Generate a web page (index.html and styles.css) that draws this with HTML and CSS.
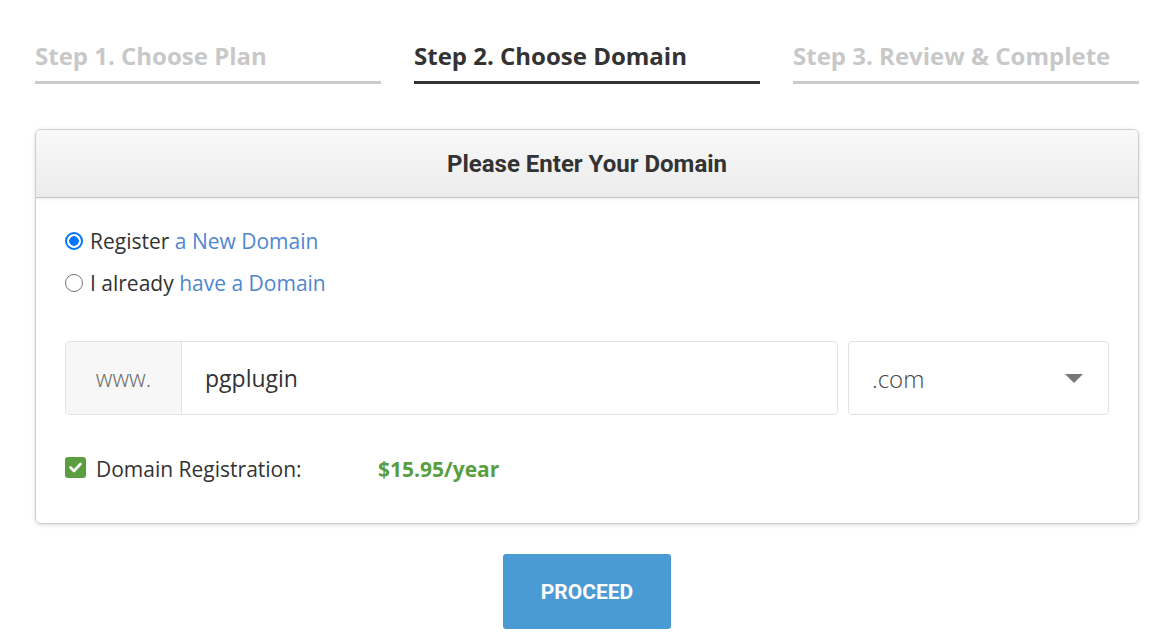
FILE: index.html
```html
<!DOCTYPE html>
<html>
<head>
<meta charset="utf-8">
<link rel="stylesheet" href="styles.css">
</head>
<body>
<div class="wrap">
  <div class="steps">
    <div class="step">Step 1. Choose Plan</div>
    <div class="step active">Step 2. Choose Domain</div>
    <div class="step">Step 3. Review &amp; Complete</div>
  </div>
  <div class="panel">
    <div class="panel-head">Please Enter Your Domain</div>
    <div class="panel-body">
      <label class="radio-row"><span class="radio checked"></span><span>Register <span class="link">a New Domain</span></span></label>
      <label class="radio-row"><span class="radio"></span><span>I already <span class="link">have a Domain</span></span></label>
      <div class="domain-row">
        <div class="input-group">
          <div class="addon">www.</div>
          <div class="field">pgplugin</div>
        </div>
        <div class="select">
          <span>.com</span>
          <svg class="caret" width="18" height="10" viewBox="0 0 18 10"><path d="M0 0H18L9 9Z" fill="#777"/></svg>
        </div>
      </div>
      <div class="reg-row">
        <span class="check"><svg width="21" height="21" viewBox="0 0 21 21"><rect width="21" height="21" rx="3" fill="#5a9e3f"/><path d="M5.5 10.5l3.5 3.5 6.5-7" stroke="#fff" stroke-width="2.6" fill="none" stroke-linecap="round" stroke-linejoin="round"/></svg></span>
        <span class="reg-label">Domain Registration:</span>
        <span class="price">$15.95/year</span>
      </div>
    </div>
  </div>
  <div class="actions">
    <button class="btn">PROCEED</button>
  </div>
</div>
</body>
</html>
```
FILE: styles.css
```css
* { box-sizing: border-box; }
body { margin: 0; background: #fff; font-family: "Open Sans", "Liberation Sans", sans-serif; color: #333; }
.wrap { width: 1104px; margin-left: 35px; padding-top: 0; }
.steps { display: flex; gap: 33px; }
.step {
  flex: 1;
  font-size: 24px;
  font-weight: 700;
  line-height: 30px;
  color: #c8c8c8;
  padding-top: 41px;
  padding-bottom: 10px;
  border-bottom: 3px solid #cbcbcb;
}
.step.active { color: #333; border-bottom-color: #333; }
.panel {
  margin-top: 45px;
  border: 1px solid #cfcfcf;
  border-radius: 6px;
  box-shadow: 0 1px 4px rgba(0,0,0,0.15);
  overflow: hidden;
}
.panel-head {
  height: 68px;
  background: linear-gradient(#f9f9f9, #ebebeb);
  border-bottom: 1px solid #c4c4c4;
  box-shadow: 0 1px 3px rgba(0,0,0,0.08);
  display: flex; align-items: center; justify-content: center;
  font-family: Roboto, "Liberation Sans", sans-serif;
  font-weight: 700;
  font-size: 24px;
  color: #333;
}
.panel-body { padding: 22px 29px 40px 29px; }
.radio-row { display: flex; align-items: center; gap: 7px; font-size: 21px; line-height: 42px; height: 42px; }
.radio {
  width: 18px; height: 18px; border-radius: 50%;
  border: 1px solid #767676; background: #fff; display: inline-block; flex: none;
}
.radio.checked { border: 2px solid #0075ff; background: radial-gradient(circle, #0075ff 0 4.5px, #fff 5px); }
.link { color: #4f86d0; }
.domain-row { display: flex; gap: 10px; margin-top: 37px; height: 74px; }
.input-group { flex: none; width: 773px; display: flex; border: 1px solid #e3e3e3; border-radius: 4px; overflow: hidden; }
.addon { width: 116px; background: #f7f7f7; border-right: 1px solid #e3e3e3; display: flex; align-items: center; justify-content: center; font-size: 23px; color: #666; font-weight: 300; }
.field { flex: 1; display: flex; align-items: center; padding-left: 23px; font-size: 23px; color: #333; }
.select { flex: none; width: 261px; border: 1px solid #e3e3e3; border-radius: 4px; display: flex; align-items: center; justify-content: space-between; padding: 0 25px 0 23px; font-size: 24px; color: #444; font-weight: 300; }
.caret { margin-top: 2px; }
.reg-row { display: flex; align-items: center; margin-top: 40px; font-size: 21px; line-height: 28px; }
.check { display: inline-flex; width: 21px; height: 21px; margin-right: 10px; position: relative; top: -2px; }
.reg-label { width: 282px; color: #333; }
.price { color: #5a9e3f; font-weight: 700; }
.actions { display: flex; justify-content: center; margin-top: 30px; }
.btn {
  width: 168px; height: 75px; border: none; border-radius: 3px;
  background: #4a9ad4; color: #fff;
  font-family: Roboto, "Liberation Sans", sans-serif; font-weight: 700; font-size: 21px;
}
```
